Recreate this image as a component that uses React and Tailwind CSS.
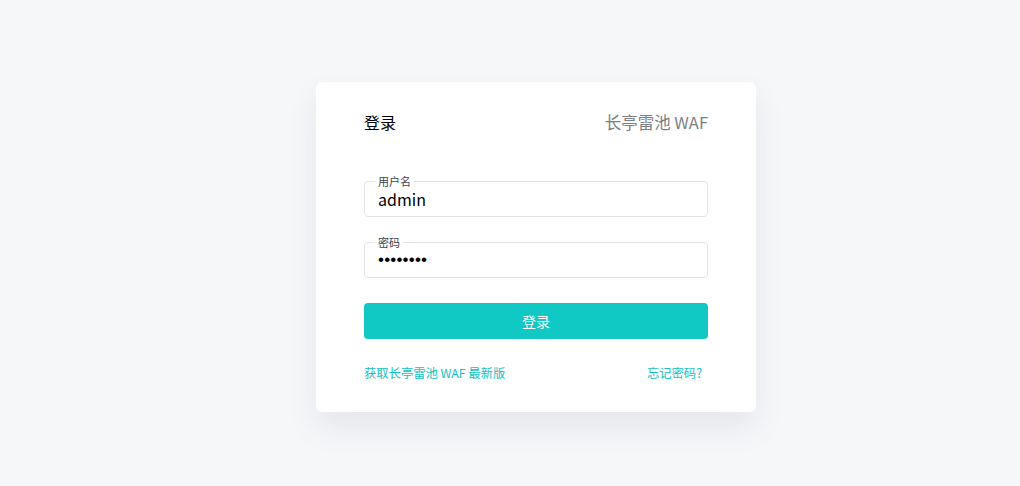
import React from "react";

export default function App() {
  return (
    <div
      className="w-[1020px] h-[486px] bg-[#f6f7f9] flex justify-start pl-[316px] pt-[82px]"
      style={{ fontFamily: '"Noto Sans CJK SC", "Noto Sans", sans-serif' }}
    >
      <div className="w-[440px] h-[330px] bg-white rounded-[6px] shadow-[0_16px_32px_rgba(30,40,70,0.08)] px-12 pt-[28px]">
        <div className="flex items-center justify-between h-6">
          <span className="text-[16px] text-black leading-6">登录</span>
          <span className="text-[16.5px] text-[#7a7f85] leading-6">长亭雷池 WAF</span>
        </div>

        <div className="mt-[47px] relative h-9 border border-[#e1e5ec] rounded-[4px] flex items-center px-[13px]">
          <span className="absolute left-[10px] top-[-9px] bg-white px-[3px] text-[11px] leading-[16px] text-[#3d4147]">用户名</span>
          <span className="text-[16px] text-black leading-6">admin</span>
        </div>

        <div className="mt-[25px] relative h-9 border border-[#e1e5ec] rounded-[4px] flex items-center px-[13px]">
          <span className="absolute left-[10px] top-[-9px] bg-white px-[3px] text-[11px] leading-[16px] text-[#3d4147]">密码</span>
          <span
            className="text-[17px] text-black leading-6 tracking-[0.2px]"
            style={{ fontFamily: '"Liberation Sans", sans-serif' }}
          >
            ••••••••
          </span>
        </div>

        <div className="mt-[25px] h-9 rounded-[4px] bg-[#10c8c4] flex items-center justify-center text-white text-[14px]">
          登录
        </div>

        <div className="mt-[26px] flex items-center justify-between text-[12.3px] leading-4 text-[#10c2bf]">
          <span>获取长亭雷池 WAF 最新版</span>
          <span className="pr-[6px]">忘记密码?</span>
        </div>
      </div>
    </div>
  );
}
